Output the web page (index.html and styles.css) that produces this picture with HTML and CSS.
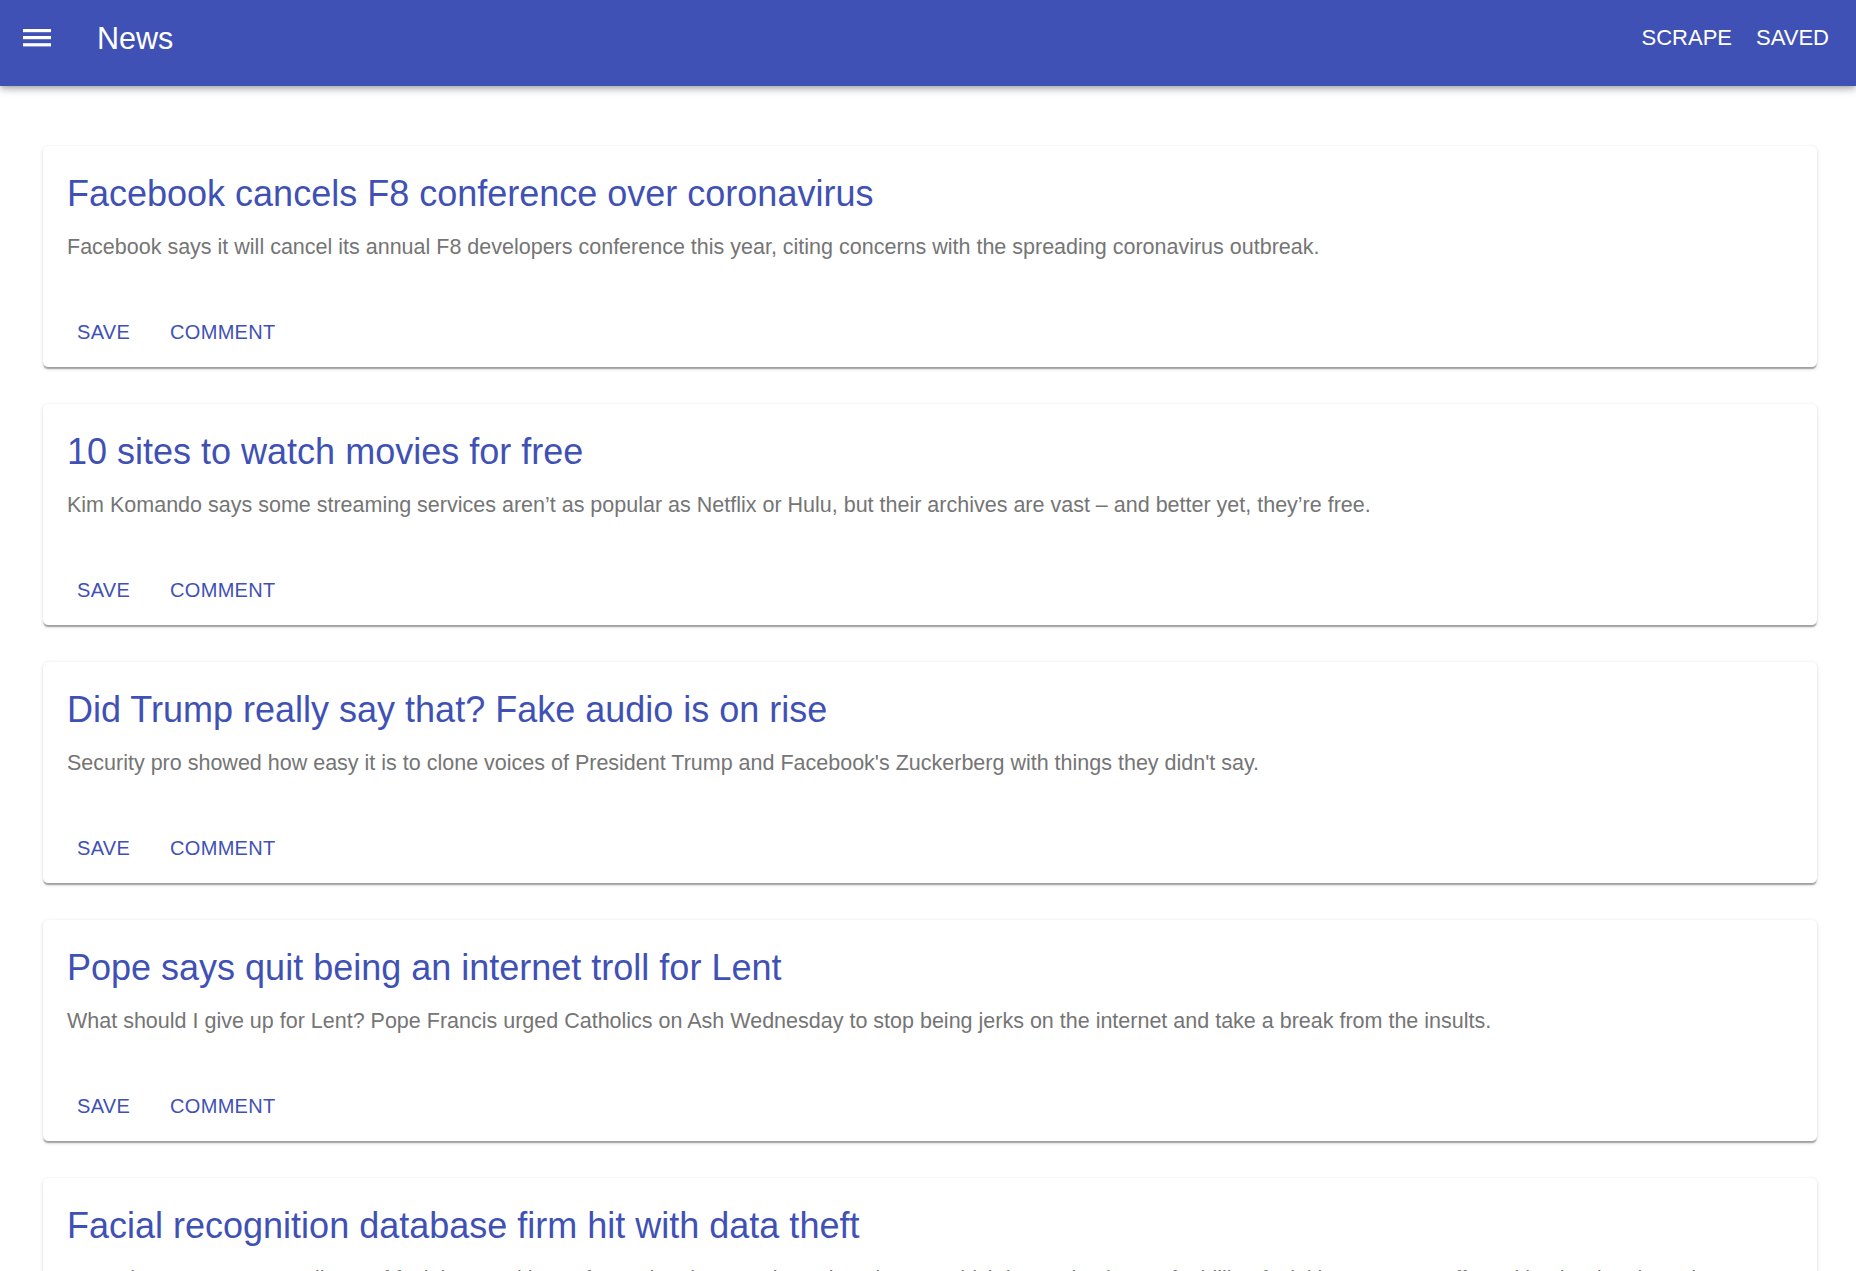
FILE: index.html
```html
<!DOCTYPE html>
<html lang="en">
<head>
<meta charset="utf-8">
<title>News</title>
<link rel="stylesheet" href="styles.css">
</head>
<body>
<header class="appbar">
  <button class="menu-btn" aria-label="menu">
    <svg class="menu-icon" width="28" height="18" viewBox="0 0 28 18"><rect x="0" y="0" width="28" height="3.2" fill="#fff"/><rect x="0" y="7" width="28" height="3.2" fill="#fff"/><rect x="0" y="14.2" width="28" height="3.2" fill="#fff"/></svg>
  </button>
  <h1 class="brand">News</h1>
  <nav class="nav">
    <a class="nav-link" href="#">SCRAPE</a>
    <a class="nav-link" href="#">SAVED</a>
  </nav>
</header>
<main class="list">
  <article class="card">
    <div class="card-content">
      <h2 class="card-title">Facebook cancels F8 conference over coronavirus</h2>
      <p class="card-text">Facebook says it will cancel its annual F8 developers conference this year, citing concerns with the spreading coronavirus outbreak.</p>
    </div>
    <div class="card-actions"><button class="action">SAVE</button><button class="action">COMMENT</button></div>
  </article>
  <article class="card">
    <div class="card-content">
      <h2 class="card-title">10 sites to watch movies for free</h2>
      <p class="card-text">Kim Komando says some streaming services aren’t as popular as Netflix or Hulu, but their archives are vast – and better yet, they’re free.</p>
    </div>
    <div class="card-actions"><button class="action">SAVE</button><button class="action">COMMENT</button></div>
  </article>
  <article class="card">
    <div class="card-content">
      <h2 class="card-title">Did Trump really say that? Fake audio is on rise</h2>
      <p class="card-text">Security pro showed how easy it is to clone voices of President Trump and Facebook's Zuckerberg with things they didn't say.</p>
    </div>
    <div class="card-actions"><button class="action">SAVE</button><button class="action">COMMENT</button></div>
  </article>
  <article class="card">
    <div class="card-content">
      <h2 class="card-title">Pope says quit being an internet troll for Lent</h2>
      <p class="card-text">What should I give up for Lent? Pope Francis urged Catholics on Ash Wednesday to stop being jerks on the internet and take a break from the insults.</p>
    </div>
    <div class="card-actions"><button class="action">SAVE</button><button class="action">COMMENT</button></div>
  </article>
  <article class="card">
    <div class="card-content">
      <h2 class="card-title">Facial recognition database firm hit with data theft</h2>
      <p class="card-text">Data about a company's clients of facial recognition software has been stolen. Clearview AI, which has a database of 3 billion facial images, was affected by the data breach.</p>
    </div>
    <div class="card-actions"><button class="action">SAVE</button><button class="action">COMMENT</button></div>
  </article>
</main>
</body>
</html>
```
FILE: styles.css
```css
* { box-sizing: border-box; }
html, body { margin: 0; padding: 0; background: #fff; }
body { font-family: "Liberation Sans", Arial, sans-serif; color: rgba(0,0,0,0.87); }

.appbar {
  position: relative;
  z-index: 2;
  display: flex;
  align-items: flex-start;
  height: 86px;
  padding: 0 27px 0 23px;
  background: #3f51b5;
  color: #fff;
  box-shadow: 0 2.67px 5.33px -1.33px rgba(0,0,0,0.2), 0 5.33px 6.67px 0 rgba(0,0,0,0.14), 0 1.33px 13.33px 0 rgba(0,0,0,0.12);
}
.menu-btn {
  margin: 29px 0 0 0;
  padding: 0;
  border: 0;
  background: none;
  display: block;
  line-height: 0;
  cursor: pointer;
}
.menu-icon { display: block; }
.brand {
  margin: 20px 0 0 46px;
  font-size: 30.5px;
  line-height: 36px;
  font-weight: 400;
}
.nav {
  margin-left: auto;
  margin-top: 25px;
  display: flex;
  gap: 24px;
}
.nav-link {
  color: #fff;
  text-decoration: none;
  font-size: 22px;
  line-height: 26px;
}

.list {
  padding: 60px 39px 40px 43px;
}
.card {
  background: #fff;
  border-radius: 5.33px;
  margin-bottom: 37px;
  box-shadow: 0 2.67px 1.33px -1.33px rgba(0,0,0,0.2), 0 1.33px 1.33px 0 rgba(0,0,0,0.14), 0 1.33px 4px 0 rgba(0,0,0,0.12);
}
.card-content {
  padding: 26px 24px 0 24px;
}
.card-title {
  margin: 0;
  font-size: 36px;
  line-height: 44px;
  font-weight: 400;
  color: #3f51b5;
}
.card-text {
  margin: 15px 0 0 0;
  font-size: 21.5px;
  line-height: 32px;
  color: #757575;
}
.card-actions {
  display: flex;
  gap: 18px;
  padding: 44px 22px 9px 23px;
}
.action {
  font-family: inherit;
  font-size: 20px;
  line-height: 35px;
  letter-spacing: 0.3px;
  padding: 8px 11px;
  border: 0;
  background: none;
  color: #3f51b5;
  cursor: pointer;
}
```
